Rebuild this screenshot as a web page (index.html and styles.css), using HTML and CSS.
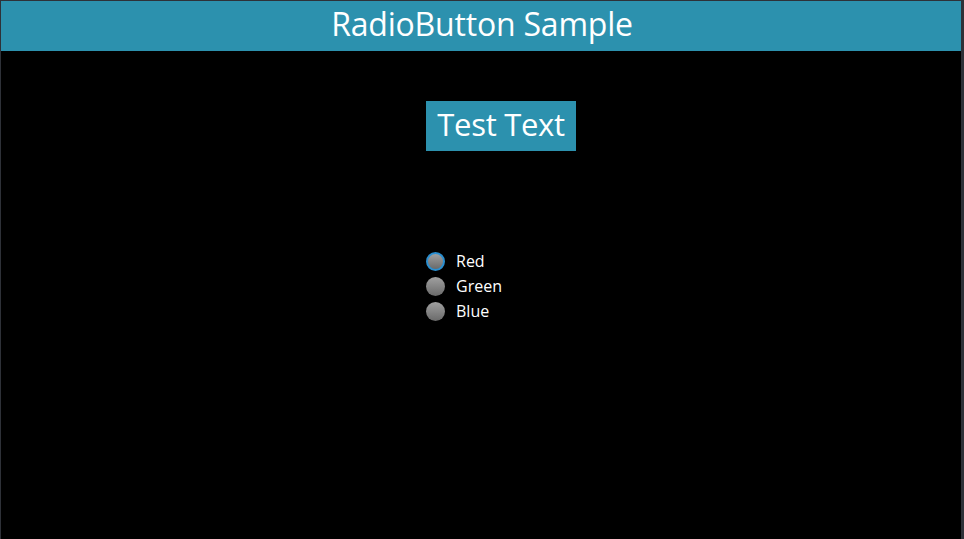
FILE: index.html
```html
<!DOCTYPE html>
<html>
<head>
<meta charset="utf-8">
<link rel="stylesheet" href="styles.css">
</head>
<body>
<div class="frame">
  <header class="header">RadioButton Sample</header>
  <main class="content">
    <div class="label">Test Text</div>
    <ul class="radios">
      <li class="radio-row"><span class="radio checked"></span><span class="radio-text">Red</span></li>
      <li class="radio-row"><span class="radio"></span><span class="radio-text">Green</span></li>
      <li class="radio-row"><span class="radio"></span><span class="radio-text">Blue</span></li>
    </ul>
  </main>
</div>
</body>
</html>
```
FILE: styles.css
```css
html, body {
  margin: 0;
  padding: 0;
  background: #2e3138;
  width: 964px;
  height: 539px;
  overflow: hidden;
}
.frame {
  box-sizing: border-box;
  width: 964px;
  height: 539px;
  border-top: 1px solid #2e3138;
  border-left: 1px solid #2e3138;
  border-right: 3px solid #2e3138;
  background: #000;
  display: flex;
  flex-direction: column;
  font-family: "Open Sans", "Noto Sans", sans-serif;
  color: #fff;
}
.header {
  box-sizing: border-box;
  height: 50px;
  flex: none;
  background: #2c91ae;
  display: flex;
  align-items: center;
  justify-content: center;
  font-size: 32px;
  letter-spacing: -0.2px;
  padding-left: 2px;
  padding-bottom: 6px;
}
.content {
  flex: 1;
  display: flex;
  flex-direction: column;
  align-items: flex-start;
  padding-left: 425px;
  padding-top: 50px;
}
.label {
  box-sizing: border-box;
  width: 150px;
  height: 50px;
  background: #2c91ae;
  display: flex;
  align-items: center;
  justify-content: center;
  font-size: 31px;
  letter-spacing: -0.3px;
  padding-bottom: 4px;
}
.radios {
  list-style: none;
  margin: 98px 0 0 0;
  padding: 0;
  display: flex;
  flex-direction: column;
}
.radio-row {
  height: 25px;
  display: flex;
  align-items: center;
}
.radio {
  box-sizing: border-box;
  width: 19px;
  height: 19px;
  border-radius: 50%;
  background: linear-gradient(#a0a0a0, #6a6a6a);
}
.radio.checked {
  border: 2px solid #2b8fd0;
}
.radio-text {
  font-size: 16px;
  margin-left: 11px;
  line-height: 25px;
}
```
